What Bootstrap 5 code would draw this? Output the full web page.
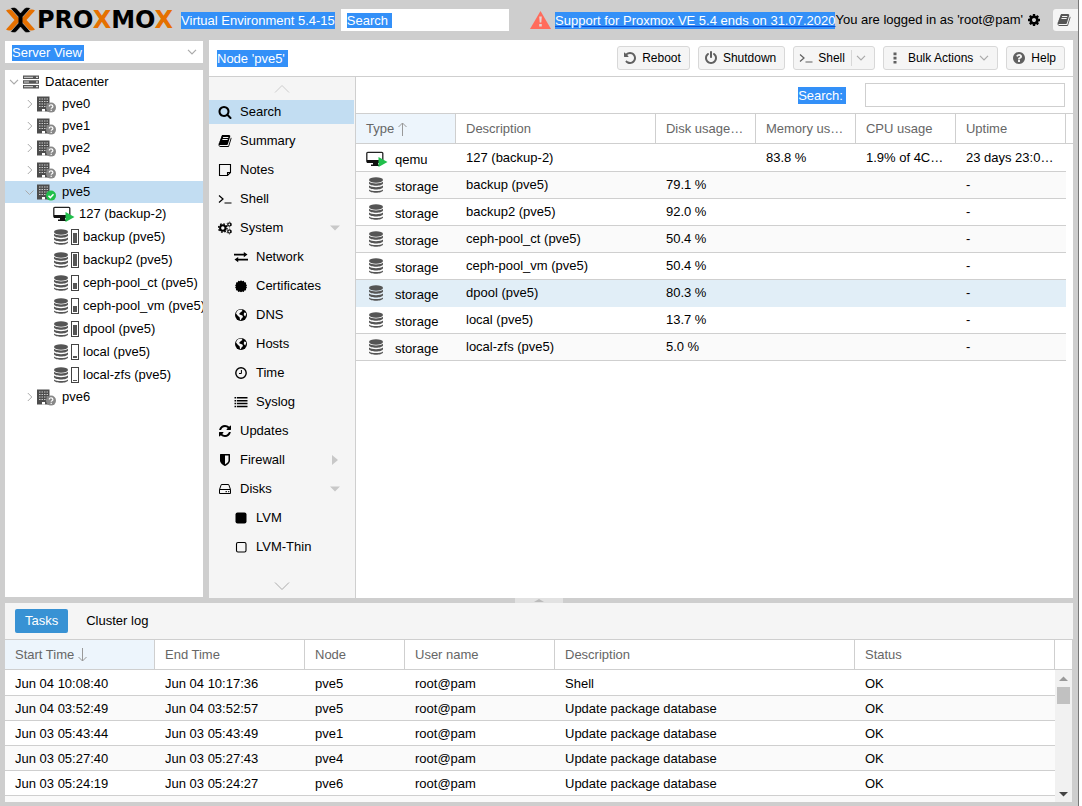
<!DOCTYPE html>
<html lang="en">
<head>
<meta charset="utf-8">
<meta name="viewport" content="width=device-width, initial-scale=1">
<title>pve5 - Proxmox Virtual Environment</title>
<link href="https://cdn.jsdelivr.net/npm/bootstrap@5.3.0/dist/css/bootstrap.min.css" rel="stylesheet">
<style>
:root{--line:#cfcfcf;--frame:#cecece;--hit:#3390f8;--sel:#c2ddf2}
body{font-family:"Liberation Sans",Arial,sans-serif;font-size:13px;line-height:18px;color:#000;background:#fff}
svg{display:block;flex:none}
.ico{width:14px;height:14px;fill:currentColor}
.shell{min-height:100vh;background:var(--frame);border-right:1px solid #777;margin-right:3px}
.topbar{height:40px;padding-left:6px}
.wordmark{font:bold 24px/24px "DejaVu Sans",sans-serif;margin-left:2px}
.wordmark span{color:#e57000}
.hit{background:var(--hit);color:#fff}
.version{margin-left:8px;line-height:17px}
.hitfield{border:0;border-radius:0;color:#fff;background-color:#fff;background-repeat:no-repeat;background-image:linear-gradient(var(--hit),var(--hit));appearance:none;height:22px;padding:0 0 0 6px;outline:0}
.find{width:168px;margin-left:6px;background-size:45px 15px;background-position:6px 4px}
.view{background-size:72px 16px;background-position:7px 4px;padding:1px 0 0 7px}
.support{color:#fff;text-decoration-color:#0a50d8;line-height:17px}
.docbtn{width:25px;height:22px;border:0;background:#f5f5f5;border-radius:3px 0 0 3px;color:#555;padding:0 0 0 4px}
.gearbtn{border:0;background:none;padding:0;margin:0 12px 0 4px;color:#000}
.workarea{padding:0 5px 5px;min-height:558px}
.leftcol{width:198px;margin-right:6px;padding-top:1px}
.chev{stroke:#aaa;fill:none;stroke-width:1}
.tree{margin-top:7px;margin-bottom:1px;padding-top:1px;background:#fff;overflow:hidden}
.tree a{display:flex;align-items:center;height:22px;white-space:nowrap;color:#000;text-decoration:none;padding-left:22px}
.tree a.root{padding-left:4px}
.tree a.leaf{padding-left:48px}
.tree a.store{height:23px}
.tree a.active{background:var(--sel)}
.label-gap{margin-left:6px}
.disk{width:16px;height:16px}
.gauge{flex:none;width:8px;height:16px;border:1px solid #444;margin:0 4px 0 2px;padding:1px;display:flex;align-items:flex-end}
.gauge i{width:100%;background:#555}
.panel{background:#fff;min-width:0}
.titlebar{height:37px;border-bottom:1px solid var(--line);padding:0 8px}
.titlebar .hit{line-height:17px;padding-right:3px}
.tool{display:flex;align-items:center;height:24px;border:1px solid #d8d8d8;border-radius:3px;background:#f5f5f5;color:#000;font-size:12px;padding:0 8px 0 5px;white-space:nowrap}
.tool .ico{color:#606060;margin-right:5px}
.tool .split{height:16px;border-left:1px solid #d8d8d8;margin:0 4px 0 6px}
.sidenav{width:147px;background:#f5f5f5;border-right:1px solid var(--line)}
.sidenav .scroll{display:flex;justify-content:center;border:0;background:none;padding:0}
.sidenav .scroll.up{padding:8px 0 7px}
.sidenav a{display:flex;align-items:center;height:24px;margin:0 1px 5px 0;padding-left:9px;color:#000;text-decoration:none}
.sidenav a .ico{margin-right:8px}
.sidenav a.sub{padding-left:25px}
.sidenav a.active{background:var(--sel)}
.sidenav a .caret{margin-left:auto;margin-right:14px;fill:#c8c8c8}
.filter{height:36px;padding-right:8px}
.filter label{line-height:17px;padding-right:3px;margin-right:19px}
.filter input{width:200px;height:24px;border:1px solid var(--line)}
.grid{table-layout:fixed;width:100%;border-collapse:separate;border-spacing:0}
.grid th,.grid td{padding:0 0 0 10px;white-space:nowrap;overflow:hidden;text-overflow:ellipsis}
.grid th{height:31px;font-weight:400;color:#666;background:#fff;border:solid var(--line);border-width:1px 1px 1px 0}
.grid th.sorted{background:#edf5fc}
.grid td{background:#fff;border-bottom:1px solid var(--line)}
.grid tbody tr:nth-child(even) td{background:#fafafa}
.grid .arrow{display:inline-block;vertical-align:-3px;stroke:#999;fill:none;margin-left:3px}
.nodes td{height:27px}
.nodes tbody tr:first-child td{height:28px}
.nodes tbody tr.hover td{background:#e1eef7;border-color:#e1eef7}
.nodes td.pad,.nodes th.pad{border-right:0;padding:0}
.nodes tbody tr td.pad{border:0;background:#fff}
.nodes .kind{vertical-align:bottom}
.kind div{display:flex;align-items:center;height:22px}
.kind .ico{width:16px;height:16px;margin:0 11px 4px 2px}
.kind .vm{margin:0 7px 2px 0}
.grid.log td{height:25px;padding-top:2px}
.log tbody tr:first-child td{height:26px}
.bottom{margin:0 5px 4px;background:#f5f5f5;position:relative}
.grip{position:absolute;top:-5px;left:510px;width:48px;height:5px;background:#e2e2e2}
.tabs{height:36px;padding-left:10px}
.tabs button{border:0;height:24px;border-radius:2px;padding:0 10px;background:none;color:#000}
.tabs button.active{background:#3892d4;color:#fff}
.more{height:6px;background:#fafafa}
.rail{width:18px;background:#f1f1f1;border-right:1px solid #cecece}
.rail .cap{height:31px;background:#fff;border:solid var(--line);border-width:1px 0}
.rail .thumb{width:13px;height:17px;background:#c1c1c1;margin-left:2px}
.ink{color:#555}
</style>
</head>
<body>
<svg width="0" height="0" class="position-absolute" aria-hidden="true">
<symbol id="search" viewBox="0 0 1792 1792"><path d="M1216 832q0-185-131.5-316.5t-316.5-131.5-316.5 131.5-131.5 316.5 131.5 316.5 316.5 131.5 316.5-131.5 131.5-316.5zm512 832q0 52-38 90t-90 38q-54 0-90-38l-343-342q-179 124-399 124-143 0-273.5-55.5t-225-150-150-225-55.500-273.500 55.500-273.500 150-225 225-150 273.500-55.500 273.500 55.500 225 150 150 225 55.500 273.500q0 220-124 399l343 343q37 37 37 90z"/></symbol>
<symbol id="book" viewBox="0 0 1792 1792"><path d="M1703 478q40 57 18 129l-275 906q-19 64-76.500 107.500t-122.500 43.500h-923q-77 0-148.500-53.500t-99.500-131.500q-24-67-2-127 0-4 3-27t4-37q1-8-3-21.500t-3-19.500q2-11 8-21t16.500-23.500 16.500-23.500q23-38 45-91.500t30-91.500q3-10 .5-30t-.5-28q3-11 17-28t17-23q21-36 42-92t25-90q1-9-2.500-32t.5-28q4-13 22-30.500t22-22.500q19-26 42.500-84.500t27.500-96.500q1-8-3-25.500t-2-26.500q2-8 9-18t18-23 17-21q8-12 16.500-30.500t15-35 16-36 19.500-32 26.500-23.500 36-11.500 47.500 5.500l-1 3q38-9 51-9h761q74 0 114 56t18 130l-274 906q-36 119-71.500 153.500t-128.500 34.500h-869q-27 0-38 15-11 16-1 43 24 70 144 70h923q29 0 56-15.500t35-41.500l300-987q7-22 5-57 38 15 59 43zm-1064 2q-4 13 2 22.500t20 9.500h608q13 0 25.500-9.500t16.500-22.500l21-64q4-13-2-22.500t-20-9.500h-608q-13 0-25.500 9.500t-16.500 22.500zm-83 256q-4 13 2 22.500t20 9.500h608q13 0 25.500-9.500t16.500-22.500l21-64q4-13-2-22.500t-20-9.500h-608q-13 0-25.500 9.500t-16.500 22.500z"/></symbol>
<symbol id="cog" viewBox="0 0 1792 1792"><path d="M1152 896q0-106-75-181t-181-75-181 75-75 181 75 181 181 75 181-75 75-181zm512-109v222q0 12-8 23t-20 13l-185 28q-19 54-39 91 35 50 107 138 10 12 10 25t-9 23q-27 37-99 108t-94 71q-12 0-26-9l-138-108q-44 23-91 38-16 136-29 186-7 28-36 28h-222q-14 0-24.500-8.500t-11.500-21.500l-28-184q-49-16-90-37l-141 107q-10 9-25 9-14 0-25-11-126-114-165-168-7-10-7-23 0-12 8-23 15-21 51-66.500t54-70.500q-27-50-41-99l-183-27q-13-2-21-12.500t-8-23.500v-222q0-12 8-23t19-13l186-28q14-46 39-92-40-57-107-138-10-12-10-24 0-10 9-23 26-36 98.500-107.500t94.500-71.500q13 0 26 10l138 107q44-23 91-38 16-136 29-186 7-28 36-28h222q14 0 24.500 8.500t11.500 21.500l28 184q49 16 90 37l142-107q9-9 24-9 13 0 25 10 129 119 165 170 7 8 7 22 0 12-8 23-15 21-51 66.500t-54 70.500q26 50 41 98l183 28q13 2 21 12.500t8 23.500z"/></symbol>
<symbol id="help" viewBox="0 0 1792 1792"><path d="M1024 1376v-192q0-14-9-23t-23-9h-192q-14 0-23 9t-9 23v192q0 14 9 23t23 9h192q14 0 23-9t9-23zm256-672q0-88-55.500-163t-138.500-116-170-41q-243 0-371 213-15 24 8 42l132 100q7 6 19 6 16 0 25-12 53-68 86-92 34-24 86-24 48 0 85.500 26t37.500 59q0 38-20 61t-68 45q-63 28-115.500 86.500t-52.500 125.500v36q0 14 9 23t23 9h192q14 0 23-9t9-23q0-19 21.500-49.500t54.500-49.500q32-18 49-28.500t46-35 44.500-48 28-60.500 12.500-81zm384 192q0 209-103 385.500t-279.500 279.500-385.500 103-385.500-103-279.500-279.500-103-385.500 103-385.500 279.500-279.500 385.500-103 385.500 103 279.500 279.500 103 385.500z"/></symbol>
<symbol id="undo" viewBox="0 0 1792 1792"><path d="M1664 896q0 156-61 298t-164 245-245 164-298 61q-172 0-327-72.500t-264-204.500q-7-10-6.500-22.500t8.500-20.500l137-138q10-9 25-9 16 2 23 12 73 95 179 147t225 52q104 0 198.500-40.500t163.500-109.500 109.500-163.500 40.500-198.500-40.500-198.500-109.500-163.500-163.500-109.500-198.500-40.500q-98 0-188 35.500t-160 101.500l137 138q31 30 14 69-17 40-59 40h-448q-26 0-45-19t-19-45v-448q0-42 40-59 39-17 69 14l130 129q107-101 244.500-156.500t284.500-55.500q156 0 298 61t245 164 164 245 61 298z"/></symbol>
<symbol id="power" viewBox="0 0 1792 1792"><path d="M1664 896q0 156-61 298t-164 245-245 164-298 61-298-61-245-164-164-245-61-298q0-182 80.500-343t226.500-270q43-32 95.500-25t83.500 50q32 42 24.500 94.500t-49.500 84.500q-98 74-151.500 181t-53.500 228q0 104 40.500 198.500t109.500 163.500 163.500 109.500 198.500 40.500 198.500-40.500 163.500-109.500 109.500-163.500 40.500-198.500q0-121-53.500-228t-151.500-181q-42-32-49.500-84.500t24.500-94.500q31-43 84-50t95 25q146 109 226.500 270t80.500 343zm-640-768v640q0 52-38 90t-90 38-90-38-38-90v-640q0-52 38-90t90-38 90 38 38 90z"/></symbol>
<symbol id="refresh" viewBox="0 0 1792 1792"><path d="M1639 1056q0 5-1 7-64 268-268 434.500t-478 166.500q-146 0-282.500-55t-243.500-157l-129 129q-19 19-45 19t-45-19-19-45v-448q0-26 19-45t45-19h448q26 0 45 19t19 45-19 45l-137 137q71 66 161 102t187 36q134 0 250-65t186-179q11-17 53-117 8-23 30-23h192q13 0 22.500 9.500t9.500 22.500zm25-800v448q0 26-19 45t-45 19h-448q-26 0-45-19t-19-45 19-45l138-138q-148-137-349-137-134 0-250 65t-186 179q-11 17-53 117-8 23-30 23h-199q-13 0-22.500-9.500t-9.500-22.500v-7q65-268 270-434.500t480-166.500q146 0 284 55.500t245 156.500l130-129q19-19 45-19t45 19 19 45z"/></symbol>
<symbol id="shield" viewBox="0 0 1792 1792"><path d="M1344 960v-640h-448v1137q119-63 213-137 235-184 235-360zm192-768v768q0 86-33.500 170.500t-83 150-118 127.500-126.500 103-121 77.500-89.500 49.500-42.500 20q-12 6-26 6t-26-6q-16-7-42.500-20t-89.500-49.500-121-77.500-126.500-103-118-127.500-83-150-33.500-170.500v-768q0-26 19-45t45-19h1152q26 0 45 19t19 45z"/></symbol>
<symbol id="db" viewBox="0 0 16 16"><ellipse cx="8" cy="3" rx="7" ry="2.700"/><path d="M1 4.800c2.500 2.200 11.500 2.200 14 0v1.700c-1 3-13 3-14 0zM1 8.600c2.500 2.200 11.500 2.200 14 0v1.700c-1 3-13 3-14 0zM1 12.400c2.500 2.200 11.500 2.200 14 0v1.200c-1 3-13 3-14 0z"/></symbol>
<symbol id="term" viewBox="0 0 14 14"><path d="M1 3.500l4 3.500-4 3.500M6.500 11h7" fill="none" stroke="currentColor" stroke-width="1.200"/></symbol>
<symbol id="note" viewBox="0 0 14 14"><path d="M1.500 1.500h11v8l-3 3h-8zM9.500 12.500v-3h3" fill="none" stroke="currentColor" stroke-width="1.100"/></symbol>
<symbol id="cogs" viewBox="0 0 14 14"><circle cx="4.800" cy="7" r="2.700" fill="none" stroke="currentColor" stroke-width="2"/><circle cx="4.800" cy="7" r="4.200" fill="none" stroke="currentColor" stroke-width="1.400" stroke-dasharray="1.650 1.650"/><g fill="none" stroke="currentColor"><circle cx="11.300" cy="3.500" r="1.500" stroke-width="1.200"/><circle cx="11.300" cy="3.500" r="2.400" stroke-width=".8" stroke-dasharray="1.250 1.250"/><circle cx="11.300" cy="10.500" r="1.500" stroke-width="1.200"/><circle cx="11.300" cy="10.500" r="2.400" stroke-width=".8" stroke-dasharray="1.250 1.250"/></g></symbol>
<symbol id="swap" viewBox="0 0 14 14"><path d="M0 3.800h9.800V2L13.500 4.600 9.800 7.200V5.400H0zM14 8.800H4.200V7L.5 9.600l3.700 2.600v-1.800H14z"/></symbol>
<symbol id="cert" viewBox="0 0 14 14"><path d="M7 1.300l1.200 1 1.600-.6.6 1.500 1.700.3-.1 1.700L13 6.300l-.8 1.100.8 1.200-1 1.100.1 1.600-1.700.2-.6 1.400-1.500-.5L7 13.200l-1.200-.8-1.600.5-.6-1.400-1.700-.2.200-1.600-1-1.100.8-1.200-.8-1.100 1-1.100-.1-1.700 1.700-.3.600-1.500 1.600.6z"/></symbol>
<symbol id="globe" viewBox="0 0 14 14"><circle cx="7" cy="7" r="6"/><path d="M4.500 2l3-.6 1 1.600-1.600 1.100L5 6l1.200.7 2.200.8.600 1.500-1.500 1.500-.7 1.800-.8-.5-.4-2.600L4 8 2 5.500l.8-2zM10 4.500l2 .5v1.500l-.8 2-1.400-1.500z" fill="#f5f5f5"/></symbol>
<symbol id="clock" viewBox="0 0 14 14"><path d="M7.400 4v3.500H5" fill="none" stroke="currentColor"/><circle cx="7" cy="7" r="5.200" fill="none" stroke="currentColor" stroke-width="1.400"/></symbol>
<symbol id="list" viewBox="0 0 14 14"><path d="M.5 2h1.700v1.500H.5zM3 2h10.500v1.500H3zM.5 4.900h1.700v1.500H.5zM3 4.900h10.500v1.500H3zM.5 7.800h1.700v1.500H.5zM3 7.800h10.500v1.500H3zM.5 10.700h1.700v1.500H.5zM3 10.700h10.500v1.500H3z"/></symbol>
<symbol id="hdd" viewBox="0 0 14 14"><path d="M1.500 7.500v4h11v-4zM1.500 7.500l1.800-5h7.400l1.800 5M7.500 9.700H9M10 9.700h1.300" fill="none" stroke="currentColor"/></symbol>
<symbol id="sq" viewBox="0 0 14 14"><rect x="1.500" y="1.500" width="11" height="11" rx="2"/></symbol>
<symbol id="sqo" viewBox="0 0 14 14"><rect x="2.500" y="2.500" width="9.500" height="9.500" rx="1.500" fill="none" stroke="currentColor" stroke-width="1.100"/></symbol>
<symbol id="dots" viewBox="0 0 14 14"><path d="M4.500 1.500h3v2.700h-3zM4.500 5.700h3v2.700h-3zM4.500 9.900h3v2.700h-3z"/></symbol>
<symbol id="down" viewBox="0 0 10 6"><path d="M1 .8l4 4 4-4" fill="none" stroke="#aaa" stroke-width="1.200"/></symbol>
<symbol id="right" viewBox="0 0 6 10"><path d="M.8 1l4 4-4 4" fill="none" stroke="#aaa"/></symbol>
<symbol id="server" viewBox="0 0 16 14"><path d="M0 .5h16v3.600H0zM0 5.200h16v3.600H0zM0 9.900h16v3.600H0z" fill="#555"/><path d="M1 2.300h9M1 7h5M1 11.700h9" stroke="#ddd"/><path d="M13 2.300h2M13 7h2M13 11.700h2" stroke="#fff"/></symbol>
<symbol id="bldg" viewBox="0 0 19 17"><path d="M0 .5h12.500v15H0z" fill="#4d4d4d"/><path d="M2 3h9M2 5.500h9M2 8h9M2 10.500h9" stroke="#c9c9c9" stroke-dasharray="1.500 1"/><path d="M5 13h3v2.500H5z" fill="#fff"/></symbol>
<symbol id="node" viewBox="0 0 19 17"><use href="#bldg"/><circle cx="14" cy="11.600" r="5" fill="#888"/><path d="M12.300 10.400c0-2.300 3.600-2 3.600 0 0 1.300-1.700 1.200-1.700 2.400M14.200 13.700v1.200" fill="none" stroke="#fff" stroke-width="1.200"/></symbol>
<symbol id="nodeok" viewBox="0 0 19 17"><use href="#bldg"/><circle cx="14" cy="11.600" r="5" fill="#21bf4b"/><path d="M11.500 11.800l1.800 1.800 3.200-3.400" fill="none" stroke="#fff" stroke-width="1.500"/></symbol>
<symbol id="vm" viewBox="0 0 22 16"><rect x=".8" y="1.300" width="16" height="10" rx="1" fill="#fff" stroke="#222" stroke-width="1.300"/><path d="M1 9h16v3H1zM7 12h5v2H7zM5 13.500h9V15H5z" fill="#111"/><path d="M12.500 6l9 5-9 5z" fill="#21bf4b"/></symbol>
</svg>

<div class="shell d-flex flex-column">
<header class="topbar d-flex align-items-center">
  <svg width="29" height="26" viewBox="0 0 29 26"><path d="M0 3.500C2 2 5 2 7 4l8 9-8 9c-2 2-5 2-7 .5L8.500 13zM29 3.500C27 2 24 2 22 4l-8 9 8 9c2 2 5 2 7 .5L20.500 13z" fill="#e57000"/><path d="M4.500 1.200C7 0 9.500.2 11 2l3.500 4L18 2c1.500-1.800 4-2 6.500-.8L14.500 12.500zM4.500 24.800c2.500 1.200 5 1 6.500-.8l3.500-4 3.500 4c1.500 1.800 4 2 6.500.8L14.500 13.500z" fill="#000" stroke="#cecece" stroke-width=".5"/><path d="M12.500 10h4v6h-4z"/></svg>
  <div class="wordmark">PRO<span>X</span>MO<span>X</span></div>
  <div class="version hit text-nowrap">Virtual Environment 5.4-15</div>
  <input class="hitfield find" type="text" value="Search" aria-label="Search">
  <div class="d-flex align-items-center ms-auto text-nowrap">
    <svg class="me-1" width="21" height="18" viewBox="0 0 21 18"><path d="M10.500 0L21 18H0z" fill="#ff6c5c"/><path d="M9.200 5.500h2.600l-.5 6H9.700zM9.200 13h2.600v2.500H9.200z" fill="#e4d5d3"/></svg>
    <a class="support hit" href="#">Support for Proxmox VE 5.4 ends on 31.07.2020</a><span>You are logged in as 'root@pam'</span>
    <button class="gearbtn" type="button" aria-label="Settings"><svg class="ico"><use href="#cog"/></svg></button>
    <button class="docbtn" type="button" aria-label="Documentation"><svg class="ico"><use href="#book"/></svg></button>
  </div>
</header>

<main class="workarea d-flex flex-grow-1">
  <div class="leftcol d-flex flex-column flex-shrink-0">
    <div class="position-relative">
      <select class="hitfield view w-100 d-block" aria-label="View"><option>Server View</option></select>
      <svg class="position-absolute top-50 end-0 translate-middle-y pe-none" style="margin-right:6px" width="10" height="6"><use href="#down"/></svg>
    </div>
    <nav class="tree flex-grow-1">
      <a class="root" href="#"><svg class="me-1" width="10" height="6"><use href="#down"/></svg><svg width="16" height="14"><use href="#server"/></svg><span class="label-gap">Datacenter</span></a>
      <a href="#"><svg class="me-1" width="6" height="10"><use href="#right"/></svg><svg width="19" height="17"><use href="#node"/></svg><span class="label-gap">pve0</span></a>
      <a href="#"><svg class="me-1" width="6" height="10"><use href="#right"/></svg><svg width="19" height="17"><use href="#node"/></svg><span class="label-gap">pve1</span></a>
      <a href="#"><svg class="me-1" width="6" height="10"><use href="#right"/></svg><svg width="19" height="17"><use href="#node"/></svg><span class="label-gap">pve2</span></a>
      <a href="#"><svg class="me-1" width="6" height="10"><use href="#right"/></svg><svg width="19" height="17"><use href="#node"/></svg><span class="label-gap">pve4</span></a>
      <a class="active" href="#"><svg class="me-1 overflow-visible" width="6" height="10"><path d="M-1.500 3.500l4 4 4-4" class="chev"/></svg><svg width="19" height="17"><use href="#nodeok"/></svg><span class="label-gap">pve5</span></a>
      <a class="leaf" href="#"><svg width="22" height="16"><use href="#vm"/></svg><span class="ms-1">127 (backup-2)</span></a>
      <a class="leaf store" href="#"><svg class="ico ink disk"><use href="#db"/></svg><span class="gauge"><i style="height:79%"></i></span>backup (pve5)</a>
      <a class="leaf store" href="#"><svg class="ico ink disk"><use href="#db"/></svg><span class="gauge"><i style="height:92%"></i></span>backup2 (pve5)</a>
      <a class="leaf store" href="#"><svg class="ico ink disk"><use href="#db"/></svg><span class="gauge"><i style="height:50%"></i></span>ceph-pool_ct (pve5)</a>
      <a class="leaf store" href="#"><svg class="ico ink disk"><use href="#db"/></svg><span class="gauge"><i style="height:50%"></i></span>ceph-pool_vm (pve5)</a>
      <a class="leaf store" href="#"><svg class="ico ink disk"><use href="#db"/></svg><span class="gauge"><i style="height:80%"></i></span>dpool (pve5)</a>
      <a class="leaf store" href="#"><svg class="ico ink disk"><use href="#db"/></svg><span class="gauge"><i style="height:14%"></i></span>local (pve5)</a>
      <a class="leaf store" href="#"><svg class="ico ink disk"><use href="#db"/></svg><span class="gauge"><i style="height:5%"></i></span>local-zfs (pve5)</a>
      <a href="#"><svg class="me-1" width="6" height="10"><use href="#right"/></svg><svg width="19" height="17"><use href="#node"/></svg><span class="label-gap">pve6</span></a>
    </nav>
  </div>

  <section class="panel d-flex flex-column flex-grow-1">
    <div class="titlebar d-flex align-items-center gap-2">
      <span class="hit me-auto">Node 'pve5'</span>
      <button class="tool" type="button"><svg class="ico"><use href="#undo"/></svg>Reboot</button>
      <button class="tool" type="button"><svg class="ico"><use href="#power"/></svg>Shutdown</button>
      <button class="tool" type="button"><svg class="ico"><use href="#term"/></svg>Shell<span class="split"></span><svg width="10" height="6"><use href="#down"/></svg></button>
      <button class="tool" type="button"><svg class="ico"><use href="#dots"/></svg>Bulk Actions<svg style="margin-left:6px" width="10" height="6"><use href="#down"/></svg></button>
      <button class="tool" type="button"><svg class="ico"><use href="#help"/></svg>Help</button>
    </div>
    <div class="d-flex flex-grow-1">
      <nav class="sidenav flex-shrink-0 d-flex flex-column">
        <button class="scroll up" type="button" aria-label="Scroll up"><svg width="16" height="8" viewBox="0 0 16 8"><path d="M1 7.500l7-7 7 7" class="chev" style="stroke:#ccc"/></svg></button>
        <a class="active" href="#"><svg class="ico"><use href="#search"/></svg>Search</a>
        <a href="#"><svg class="ico"><use href="#book"/></svg>Summary</a>
        <a href="#"><svg class="ico"><use href="#note"/></svg>Notes</a>
        <a href="#"><svg class="ico"><use href="#term"/></svg>Shell</a>
        <a href="#"><svg class="ico"><use href="#cogs"/></svg>System<svg class="caret" width="10" height="6"><path d="M0 .5h10l-5 5z"/></svg></a>
        <a class="sub" href="#"><svg class="ico"><use href="#swap"/></svg>Network</a>
        <a class="sub" href="#"><svg class="ico"><use href="#cert"/></svg>Certificates</a>
        <a class="sub" href="#"><svg class="ico"><use href="#globe"/></svg>DNS</a>
        <a class="sub" href="#"><svg class="ico"><use href="#globe"/></svg>Hosts</a>
        <a class="sub" href="#"><svg class="ico"><use href="#clock"/></svg>Time</a>
        <a class="sub" href="#"><svg class="ico"><use href="#list"/></svg>Syslog</a>
        <a href="#"><svg class="ico"><use href="#refresh"/></svg>Updates</a>
        <a href="#"><svg class="ico"><use href="#shield"/></svg>Firewall<svg class="caret" width="8" height="10"><path d="M0 0v10l6-5z"/></svg></a>
        <a href="#"><svg class="ico"><use href="#hdd"/></svg>Disks<svg class="caret" width="10" height="6"><path d="M0 .5h10l-5 5z"/></svg></a>
        <a class="sub" href="#"><svg class="ico"><use href="#sq"/></svg>LVM</a>
        <a class="sub" href="#"><svg class="ico"><use href="#sqo"/></svg>LVM-Thin</a>
        <button class="scroll mt-auto pb-2" type="button" aria-label="Scroll down"><svg width="16" height="8" viewBox="0 0 16 8"><path d="M1 .5l7 7 7-7" class="chev"/></svg></button>
      </nav>
      <div class="flex-grow-1" style="min-width:0">
        <div class="filter d-flex align-items-center justify-content-end">
          <label class="hit" for="q">Search:</label><input id="q" type="text">
        </div>
        <table class="grid nodes">
          <colgroup><col style="width:100px"><col><col style="width:100px"><col style="width:100px"><col style="width:100px"><col style="width:110px"><col style="width:7px"></colgroup>
          <thead><tr><th class="sorted">Type<svg class="arrow" width="11" height="14"><path d="M5.500 14V1M1.500 5l4-4 4 4"/></svg></th><th>Description</th><th>Disk usage…</th><th>Memory us…</th><th>CPU usage</th><th>Uptime</th><th class="pad"></th></tr></thead>
          <tbody>
          <tr><td class="kind"><div><svg class="vm" width="22" height="16"><use href="#vm"/></svg>qemu</div></td><td>127 (backup-2)</td><td></td><td>83.8 %</td><td>1.9% of 4C…</td><td>23 days 23:0…</td><td class="pad"></td></tr>
          <tr><td class="kind"><div><svg class="ico ink"><use href="#db"/></svg>storage</div></td><td>backup (pve5)</td><td>79.1 %</td><td></td><td></td><td>-</td><td class="pad"></td></tr>
          <tr><td class="kind"><div><svg class="ico ink"><use href="#db"/></svg>storage</div></td><td>backup2 (pve5)</td><td>92.0 %</td><td></td><td></td><td>-</td><td class="pad"></td></tr>
          <tr><td class="kind"><div><svg class="ico ink"><use href="#db"/></svg>storage</div></td><td>ceph-pool_ct (pve5)</td><td>50.4 %</td><td></td><td></td><td>-</td><td class="pad"></td></tr>
          <tr><td class="kind"><div><svg class="ico ink"><use href="#db"/></svg>storage</div></td><td>ceph-pool_vm (pve5)</td><td>50.4 %</td><td></td><td></td><td>-</td><td class="pad"></td></tr>
          <tr class="hover"><td class="kind"><div><svg class="ico ink"><use href="#db"/></svg>storage</div></td><td>dpool (pve5)</td><td>80.3 %</td><td></td><td></td><td>-</td><td class="pad"></td></tr>
          <tr><td class="kind"><div><svg class="ico ink"><use href="#db"/></svg>storage</div></td><td>local (pve5)</td><td>13.7 %</td><td></td><td></td><td>-</td><td class="pad"></td></tr>
          <tr><td class="kind"><div><svg class="ico ink"><use href="#db"/></svg>storage</div></td><td>local-zfs (pve5)</td><td>5.0 %</td><td></td><td></td><td>-</td><td class="pad"></td></tr>
          </tbody>
        </table>
      </div>
    </div>
  </section>
</main>

<section class="bottom">
  <div class="grip"><svg class="mx-auto" width="10" height="5"><path d="M0 4h10l-5-3z" fill="#bbb"/></svg></div>
  <div class="tabs d-flex align-items-center gap-2">
    <button class="active" type="button">Tasks</button><button type="button">Cluster log</button>
  </div>
  <div class="d-flex">
    <div class="flex-grow-1" style="min-width:0">
      <table class="grid log">
        <colgroup><col style="width:150px"><col style="width:150px"><col style="width:100px"><col style="width:150px"><col><col style="width:200px"></colgroup>
        <thead><tr><th class="sorted">Start Time<svg class="arrow" width="11" height="14"><path d="M5.500 0v13M1.500 9l4 4 4-4"/></svg></th><th>End Time</th><th>Node</th><th>User name</th><th>Description</th><th>Status</th></tr></thead>
        <tbody>
        <tr><td>Jun 04 10:08:40</td><td>Jun 04 10:17:36</td><td>pve5</td><td>root@pam</td><td>Shell</td><td>OK</td></tr>
        <tr><td>Jun 04 03:52:49</td><td>Jun 04 03:52:57</td><td>pve5</td><td>root@pam</td><td>Update package database</td><td>OK</td></tr>
        <tr><td>Jun 03 05:43:44</td><td>Jun 03 05:43:49</td><td>pve1</td><td>root@pam</td><td>Update package database</td><td>OK</td></tr>
        <tr><td>Jun 03 05:27:40</td><td>Jun 03 05:27:43</td><td>pve4</td><td>root@pam</td><td>Update package database</td><td>OK</td></tr>
        <tr><td>Jun 03 05:24:19</td><td>Jun 03 05:24:27</td><td>pve6</td><td>root@pam</td><td>Update package database</td><td>OK</td></tr>
        </tbody>
      </table>
      <div class="more"></div>
    </div>
    <div class="rail d-flex flex-column" aria-hidden="true">
      <div class="cap"></div>
      <svg width="17" height="17"><path d="M4 11h9l-4.500-4.500z" fill="#999"/></svg>
      <div class="thumb"></div>
      <svg class="mt-auto" width="17" height="17"><path d="M4 7h9l-4.500 4.500z" fill="#444"/></svg>
    </div>
  </div>
</section>
</div>
<script src="https://cdn.jsdelivr.net/npm/bootstrap@5.3.0/dist/js/bootstrap.bundle.min.js"></script>
</body>
</html>
